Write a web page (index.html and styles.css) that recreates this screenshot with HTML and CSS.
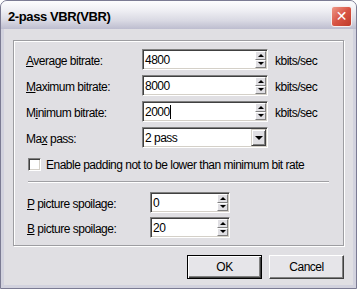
FILE: index.html
```html
<!DOCTYPE html>
<html lang="en">

<head>
    <meta charset="UTF-8">
    <title>2-pass VBR(VBR)</title>
    <link rel="stylesheet" href="styles.css">
</head>

<body>
    <div class="window">
        <div class="titlebar">
            <span class="title">2-pass VBR(VBR)</span>
            <span class="close-btn">&#x2715;</span>
        </div>
        <div class="client">
            <div class="group">
                <div class="row">
                    <span class="label"><u>A</u>verage bitrate:</span>
                    <div class="edit">
                        <span class="value">4800</span>
                        <div class="spin">
                            <div class="spin-btn"><i class="arrow-up"></i></div>
                            <div class="spin-btn"><i class="arrow-down"></i></div>
                        </div>
                    </div>
                    <span class="unit">kbits/sec</span>
                </div>
                <div class="row">
                    <span class="label"><u>M</u>aximum bitrate:</span>
                    <div class="edit">
                        <span class="value">8000</span>
                        <div class="spin">
                            <div class="spin-btn"><i class="arrow-up"></i></div>
                            <div class="spin-btn"><i class="arrow-down"></i></div>
                        </div>
                    </div>
                    <span class="unit">kbits/sec</span>
                </div>
                <div class="row">
                    <span class="label">M<u>i</u>nimum bitrate:</span>
                    <div class="edit">
                        <span class="value">2000<i class="caret"></i></span>
                        <div class="spin">
                            <div class="spin-btn"><i class="arrow-up"></i></div>
                            <div class="spin-btn"><i class="arrow-down"></i></div>
                        </div>
                    </div>
                    <span class="unit">kbits/sec</span>
                </div>
                <div class="row">
                    <span class="label">Ma<u>x</u> pass:</span>
                    <div class="edit">
                        <span class="value">2 pass</span>
                        <div class="drop-btn"><i class="arrow-drop"></i></div>
                    </div>
                </div>
                <div class="check-row">
                    <span class="checkbox"></span>
                    <span>Enable padding not to be lower than minimum bit rate</span>
                </div>
                <div class="separator"></div>
                <div class="row row-small">
                    <span class="label label-wide"><u>P</u> picture spoilage:</span>
                    <div class="edit edit-small">
                        <span class="value">0</span>
                        <div class="spin">
                            <div class="spin-btn"><i class="arrow-up"></i></div>
                            <div class="spin-btn"><i class="arrow-down"></i></div>
                        </div>
                    </div>
                </div>
                <div class="row row-small">
                    <span class="label label-wide"><u>B</u> picture spoilage:</span>
                    <div class="edit edit-small">
                        <span class="value">20</span>
                        <div class="spin">
                            <div class="spin-btn"><i class="arrow-up"></i></div>
                            <div class="spin-btn"><i class="arrow-down"></i></div>
                        </div>
                    </div>
                </div>
            </div>
            <div class="buttons">
                <button class="btn btn-default">OK</button>
                <button class="btn">Cancel</button>
            </div>
        </div>
    </div>
</body>

</html>
```

FILE: styles.css
```css
* {
    margin: 0px;
    padding: 0px;
    box-sizing: border-box;
}

body {
    width: 357px;
    height: 289px;
    overflow: hidden;
    background-color: white;
    font-family: "Liberation Sans", Arial, sans-serif;
    font-size: 12px;
    letter-spacing: -0.5px;
    color: black;
    white-space: nowrap;
}

.window {
    width: 357px;
    height: 289px;
    display: flex;
    flex-direction: column;
    border: 1px solid #7b7b93;
    border-radius: 7px 7px 0 0;
    background-color: #d2d2de;
    overflow: hidden;
}

.titlebar {
    height: 28px;
    flex: none;
    display: flex;
    justify-content: space-between;
    padding: 0 4px 0 7px;
    background: linear-gradient(#fdfdfe 0%, #eeeef3 35%, #d9d9e3 70%, #bdbdcf 100%);
}

.title {
    font-weight: bold;
    font-size: 13px;
    letter-spacing: -0.4px;
    padding-top: 8px;
}

.close-btn {
    flex: none;
    margin-top: 5px;
    width: 21px;
    height: 21px;
    border: 1px solid #f6eeee;
    border-radius: 3px;
    background: linear-gradient(135deg, #ee9888, #d85444 50%, #bf3a2a);
    color: white;
    font-family: "DejaVu Sans", sans-serif;
    font-size: 14px;
    font-weight: bold;
    letter-spacing: 0;
    line-height: 19px;
    text-align: center;
}

.client {
    flex: 1;
    margin: 0 3px 3px;
    padding: 11px 9px 0;
    background-color: #e0dfe3;
    display: flex;
    flex-direction: column;
}

/* etched group frame */
.group {
    height: 206px;
    border: 1px solid #9d9da1;
    box-shadow: inset 1px 1px 0 white, 1px 1px 0 white;
    padding: 8px 12px 0;
    display: flex;
    flex-direction: column;
}

.row {
    display: flex;
    align-items: center;
    height: 21px;
    margin-bottom: 5px;
}

.label {
    width: 116px;
    padding-top: 2px;
}

.label-wide {
    width: 124px;
    padding-left: 1px;
}

.edit {
    width: 126px;
    height: 21px;
    display: flex;
    padding: 1px;
    background-color: white;
    border: 1px solid;
    border-color: #808080 white white #808080;
    box-shadow: inset 1px 1px 0 #404040, inset -1px -1px 0 #d4d0c8;
}

.edit-small {
    width: 80px;
}

.value {
    flex: 1;
    padding: 2px 0 0 1px;
    line-height: 15px;
}

.caret {
    display: inline-block;
    width: 1px;
    height: 14px;
    background-color: black;
    vertical-align: -3px;
}

.spin {
    width: 11px;
    display: flex;
    flex-direction: column;
}

.spin-btn {
    flex: 1;
    display: flex;
    align-items: center;
    justify-content: center;
    background-color: #e0dfe3;
    border: 1px solid;
    border-color: white #808080 #808080 white;
}

.arrow-up {
    border-left: 3px solid transparent;
    border-right: 3px solid transparent;
    border-bottom: 3px solid black;
}

.arrow-down {
    border-left: 3px solid transparent;
    border-right: 3px solid transparent;
    border-top: 3px solid black;
}

.drop-btn {
    width: 15px;
    display: flex;
    align-items: center;
    justify-content: center;
    background-color: #e0dfe3;
    border: 1px solid;
    border-color: #d4d0c8 #404040 #404040 #d4d0c8;
    box-shadow: inset 1px 1px 0 white, inset -1px -1px 0 #808080;
}

.arrow-drop {
    border-left: 4px solid transparent;
    border-right: 4px solid transparent;
    border-top: 4px solid black;
}

.unit {
    margin-left: 7px;
    padding-top: 2px;
}

.check-row {
    display: flex;
    align-items: center;
    gap: 5px;
    height: 13px;
    margin: 5px 0 0 2px;
}

.checkbox {
    width: 13px;
    height: 13px;
    flex: none;
    background-color: white;
    border: 1px solid;
    border-color: #808080 white white #808080;
    box-shadow: inset 1px 1px 0 #404040, inset -1px -1px 0 #d4d0c8;
}

.separator {
    height: 2px;
    margin: 10px 2px 9px 2px;
    border-top: 1px solid #a0a0a4;
    border-bottom: 1px solid white;
}

.row-small {
    margin-bottom: 4px;
}

.buttons {
    display: flex;
    justify-content: flex-end;
    gap: 7px;
    margin-top: 9px;
}

.btn {
    width: 75px;
    height: 24px;
    font: inherit;
    letter-spacing: inherit;
    color: black;
    background-color: #e6e5e9;
    border: 1px solid;
    border-color: white #404040 #404040 white;
    box-shadow: inset -1px -1px 0 #808080;
}

.btn-default {
    border-color: black;
    box-shadow: inset 1px 1px 0 white, inset -1px -1px 0 #404040, inset -2px -2px 0 #808080;
}
```
